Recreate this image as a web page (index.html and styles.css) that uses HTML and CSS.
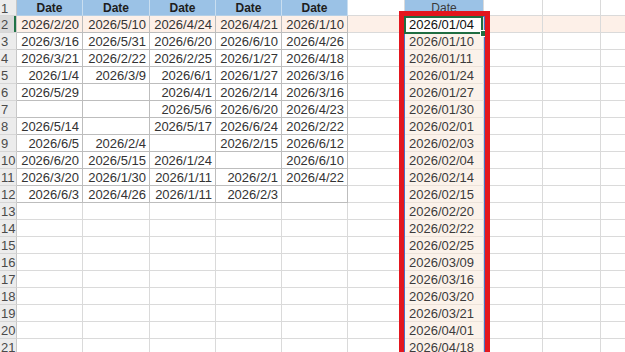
FILE: index.html
```html
<!DOCTYPE html>
<html>
<head>
<meta charset="utf-8">
<link rel="stylesheet" href="styles.css">
</head>
<body>
<div class="sheet">
  <div class="grid">
    <div class="rn">1</div><div class="h">Date</div><div class="h">Date</div><div class="h">Date</div><div class="h">Date</div><div class="h">Date</div><div class="c"></div><div class="c gh">Date</div><div class="c"></div><div class="c"></div><div class="c"></div>

    <div class="rn act">2</div><div class="d hl">2026/2/20</div><div class="d hl">2026/5/10</div><div class="d hl">2026/4/24</div><div class="d hl">2026/4/21</div><div class="d hl">2026/1/10</div><div class="c hl"></div><div class="c g first">2026/01/04</div><div class="c hl"></div><div class="c hl"></div><div class="c hl"></div>

    <div class="rn">3</div><div class="d">2026/3/16</div><div class="d">2026/5/31</div><div class="d">2026/6/20</div><div class="d">2026/6/10</div><div class="d">2026/4/26</div><div class="c"></div><div class="c g">2026/01/10</div><div class="c"></div><div class="c"></div><div class="c"></div>

    <div class="rn">4</div><div class="d">2026/3/21</div><div class="d">2026/2/22</div><div class="d">2026/2/25</div><div class="d">2026/1/27</div><div class="d">2026/4/18</div><div class="c"></div><div class="c g">2026/01/11</div><div class="c"></div><div class="c"></div><div class="c"></div>

    <div class="rn">5</div><div class="d">2026/1/4</div><div class="d">2026/3/9</div><div class="d">2026/6/1</div><div class="d">2026/1/27</div><div class="d">2026/3/16</div><div class="c"></div><div class="c g">2026/01/24</div><div class="c"></div><div class="c"></div><div class="c"></div>

    <div class="rn">6</div><div class="d">2026/5/29</div><div class="d"></div><div class="d">2026/4/1</div><div class="d">2026/2/14</div><div class="d">2026/3/16</div><div class="c"></div><div class="c g">2026/01/27</div><div class="c"></div><div class="c"></div><div class="c"></div>

    <div class="rn">7</div><div class="d"></div><div class="d"></div><div class="d">2026/5/6</div><div class="d">2026/6/20</div><div class="d">2026/4/23</div><div class="c"></div><div class="c g">2026/01/30</div><div class="c"></div><div class="c"></div><div class="c"></div>

    <div class="rn">8</div><div class="d">2026/5/14</div><div class="d"></div><div class="d">2026/5/17</div><div class="d">2026/6/24</div><div class="d">2026/2/22</div><div class="c"></div><div class="c g">2026/02/01</div><div class="c"></div><div class="c"></div><div class="c"></div>

    <div class="rn">9</div><div class="d">2026/6/5</div><div class="d">2026/2/4</div><div class="d"></div><div class="d">2026/2/15</div><div class="d">2026/6/12</div><div class="c"></div><div class="c g">2026/02/03</div><div class="c"></div><div class="c"></div><div class="c"></div>

    <div class="rn">10</div><div class="d">2026/6/20</div><div class="d">2026/5/15</div><div class="d">2026/1/24</div><div class="d"></div><div class="d">2026/6/10</div><div class="c"></div><div class="c g">2026/02/04</div><div class="c"></div><div class="c"></div><div class="c"></div>

    <div class="rn">11</div><div class="d">2026/3/20</div><div class="d">2026/1/30</div><div class="d">2026/1/11</div><div class="d">2026/2/1</div><div class="d">2026/4/22</div><div class="c"></div><div class="c g">2026/02/14</div><div class="c"></div><div class="c"></div><div class="c"></div>

    <div class="rn">12</div><div class="d">2026/6/3</div><div class="d">2026/4/26</div><div class="d">2026/1/11</div><div class="d">2026/2/3</div><div class="d"></div><div class="c"></div><div class="c g">2026/02/15</div><div class="c"></div><div class="c"></div><div class="c"></div>

    <div class="rn">13</div><div class="c"></div><div class="c"></div><div class="c"></div><div class="c"></div><div class="c"></div><div class="c"></div><div class="c g">2026/02/20</div><div class="c"></div><div class="c"></div><div class="c"></div>

    <div class="rn">14</div><div class="c"></div><div class="c"></div><div class="c"></div><div class="c"></div><div class="c"></div><div class="c"></div><div class="c g">2026/02/22</div><div class="c"></div><div class="c"></div><div class="c"></div>

    <div class="rn">15</div><div class="c"></div><div class="c"></div><div class="c"></div><div class="c"></div><div class="c"></div><div class="c"></div><div class="c g">2026/02/25</div><div class="c"></div><div class="c"></div><div class="c"></div>

    <div class="rn">16</div><div class="c"></div><div class="c"></div><div class="c"></div><div class="c"></div><div class="c"></div><div class="c"></div><div class="c g">2026/03/09</div><div class="c"></div><div class="c"></div><div class="c"></div>

    <div class="rn">17</div><div class="c"></div><div class="c"></div><div class="c"></div><div class="c"></div><div class="c"></div><div class="c"></div><div class="c g">2026/03/16</div><div class="c"></div><div class="c"></div><div class="c"></div>

    <div class="rn">18</div><div class="c"></div><div class="c"></div><div class="c"></div><div class="c"></div><div class="c"></div><div class="c"></div><div class="c g">2026/03/20</div><div class="c"></div><div class="c"></div><div class="c"></div>

    <div class="rn">19</div><div class="c"></div><div class="c"></div><div class="c"></div><div class="c"></div><div class="c"></div><div class="c"></div><div class="c g">2026/03/21</div><div class="c"></div><div class="c"></div><div class="c"></div>

    <div class="rn">20</div><div class="c"></div><div class="c"></div><div class="c"></div><div class="c"></div><div class="c"></div><div class="c"></div><div class="c g">2026/04/01</div><div class="c"></div><div class="c"></div><div class="c"></div>

    <div class="rn">21</div><div class="c"></div><div class="c"></div><div class="c"></div><div class="c"></div><div class="c"></div><div class="c"></div><div class="c g">2026/04/18</div><div class="c"></div><div class="c"></div><div class="c"></div>
  </div>
  <div class="selection"></div>
  <div class="active"><span class="handle"></span></div>
  <div class="redbox"></div>
</div>
</body>
</html>
```

FILE: styles.css
```css
html, body {
  margin: 0;
  padding: 0;
  background: #ffffff;
  overflow: hidden;
}

.sheet {
  position: relative;
  width: 625px;
  height: 352px;
  overflow: hidden;
  font-family: "Liberation Sans", Arial, sans-serif;
  font-size: 13px;
  color: #333333;
}

.grid {
  display: grid;
  grid-template-columns: 17px 66px 67px 66px 66px 66px 57px 79px 59px 58px 40px;
  grid-template-rows: 16px repeat(20, 17px);
}

.grid > div {
  box-sizing: border-box;
  white-space: nowrap;
  overflow: hidden;
  border-right: 1px solid #dadada;
  border-bottom: 1px solid #dadada;
  padding-top: 2px;
  line-height: 14px;
}

.rn {
  background: #ececec;
  color: #4a4a4a;
  padding-left: 1px;
  border-right-color: #c8c8c8 !important;
  border-bottom-color: #d6d6d6 !important;
}

.rn.act {
  background: #d9d9d9;
  box-shadow: inset -2px 0 0 #217346;
}

.h {
  background: #9bc2e6;
  color: #1d1d1d;
  font-weight: bold;
  font-size: 12px;
  text-align: center;
  padding-top: 1px !important;
  border-right-color: #c9def0 !important;
  border-bottom-color: #b4cfe6 !important;
}

.d {
  text-align: right;
  padding-right: 3px;
  border-right-color: #bdbdbd !important;
  border-bottom-color: #bdbdbd !important;
}

.c {
  padding-left: 4px;
}

.hl {
  background: #fdf0e8;
}

.gh {
  background: #9bc2e6;
  text-align: center;
  padding-left: 0 !important;
  padding-top: 1px !important;
  color: #3a3a3a;
  font-size: 12px;
  border-bottom-color: #b4cfe6 !important;
}

.g {
  background: #fbf2ea;
  color: #3b3b3b;
  border-bottom-color: #ece2d9 !important;
}

.g.first {
  background: #ffffff;
  color: #111111;
}

.selection {
  position: absolute;
  left: 404px;
  top: 16px;
  width: 79px;
  height: 400px;
  border: 1px solid #4a6fc4;
}

.active {
  position: absolute;
  left: 404px;
  top: 16px;
  width: 75px;
  height: 14px;
  border: 2px solid #1f6e43;
}

.handle {
  position: absolute;
  right: -6px;
  bottom: -5px;
  width: 5px;
  height: 5px;
  background: #1f6e43;
  border: 1px solid #ffffff;
}

.redbox {
  position: absolute;
  left: 399px;
  top: 11px;
  width: 81px;
  height: 400px;
  border: 5px solid #e3161e;
}
```
